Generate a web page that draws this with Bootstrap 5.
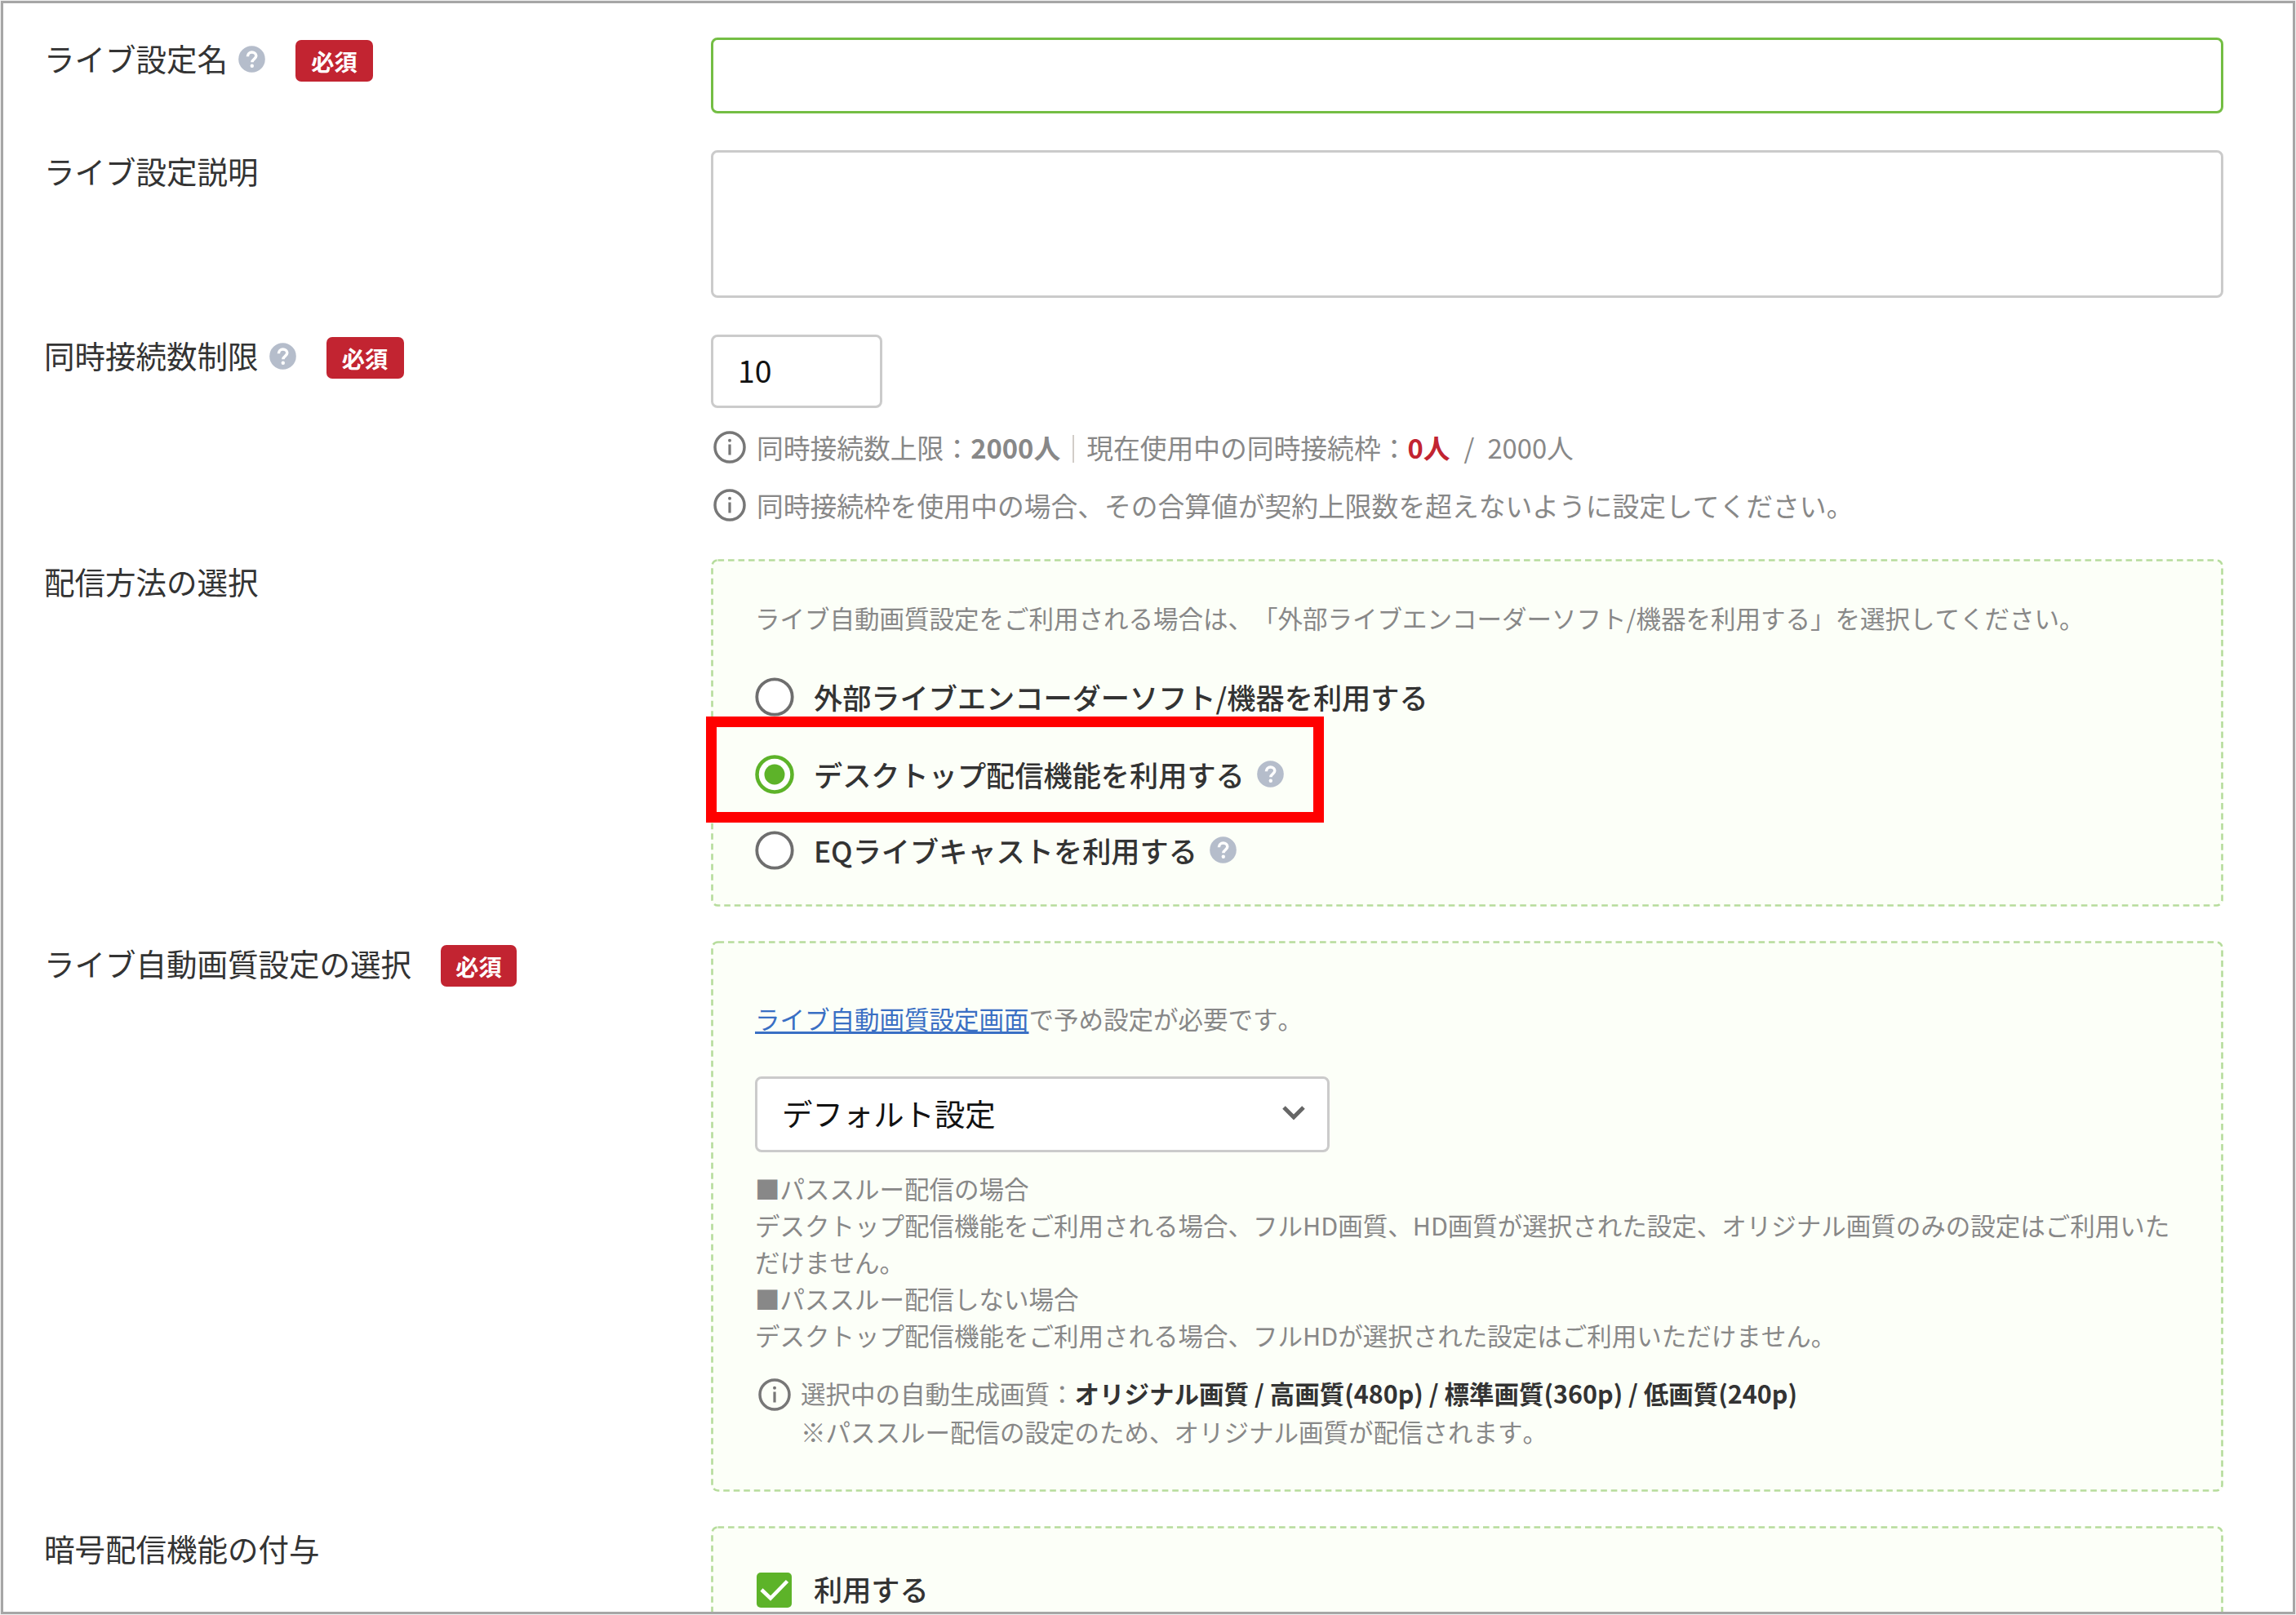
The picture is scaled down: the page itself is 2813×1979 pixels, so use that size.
<!DOCTYPE html>
<html lang="ja">
<head>
<meta charset="utf-8">
<meta name="viewport" content="width=device-width, initial-scale=1">
<title>ライブ設定</title>
<link href="https://cdn.jsdelivr.net/npm/bootstrap@5.3.0/dist/css/bootstrap.min.css" rel="stylesheet">
<style>
  html, body { height: 1979px; overflow: hidden; }
  body { background: #f0f0f0; padding: 1px; font-family: "Noto Sans CJK JP", "Noto Sans", sans-serif; color: #333; text-spacing-trim: space-all; font-kerning: none; }
  .frame { height: 1977px; border: 3px solid #a6a6a6; background: #fff; padding: 42px 85px 0 50px; overflow: hidden; }
  .frow { display: flex; }
  .flabel { flex: 0 0 817px; height: 50px; line-height: 50px; font-size: 37.5px; display: flex; align-items: flex-start; white-space: nowrap; }
  .flabel.low { padding-top: 1px; height: 51px; }
  .flabel.lower { padding-top: 2px; height: 52px; }
  .ffield { flex: 1 1 0; min-width: 0; }
  .req { background: #c22431; color: #fff; font-weight: 700; font-size: 28.2px; line-height: 52px; height: 51px; width: 95px; border-radius: 7px; text-align: center; padding: 0; margin: 3px 0 0 37px; }
  .qmark { width: 33px; height: 33px; flex: none; }
  .flabel .qmark { margin: 10px 0 0 13px; }
  .box-in { border: 3px solid #cbcbcb; border-radius: 8px; background: #fff; padding: 0 30px; font-size: 37.4px; color: #111; box-shadow: none !important; }
  .box-in.active-in { border-color: #74be44; height: 93px; }
  .note { font-size: 32.77px; line-height: 48px; height: 48px; color: #888; display: flex; white-space: nowrap; }
  .note .info { margin: 4px 13px 0 0; }
  .info { width: 40px; height: 40px; flex: none; }
  .bar { width: 2px; height: 34px; background: #d2cdc8; margin: 9px 15px 0 15px; }
  .panel { position: relative; background: #fcfff8; border-radius: 8px; padding: 0 54px; }
  .dash { position: absolute; inset: 0; width: 100%; height: 100%; pointer-events: none; }
  .dash rect { x: 1.5px; y: 1.5px; width: calc(100% - 3px); height: calc(100% - 3px); rx: 7px; fill: none; stroke: #b6dc9c; stroke-width: 2.6px; stroke-dasharray: 7.6 4.9; }
  .txt { font-size: 30.5px; color: #888; line-height: 45.1px; }
  .opt { display: flex; align-items: center; font-size: 35.2px; font-weight: 500; line-height: 46px; height: 48px; white-space: nowrap; }
  .opt .dot { width: 48px; height: 48px; flex: none; margin-right: 24px; }
  .opt .qmark { margin-left: 15px; margin-top: -2px; }
  .redbox { position: absolute; left: -6px; top: 193px; width: 757px; height: 130px; border: 13px solid #f00; }
  .lnk { color: #3a6fc4; text-decoration: underline; text-decoration-thickness: 3px; text-underline-offset: 3px; text-decoration-skip-ink: none; }
  .sel { width: 704px; height: 93px; line-height: 52px; padding-bottom: 3px; }
</style>
</head>
<body>
<svg width="0" height="0" class="position-absolute">
  <defs>
    <symbol id="q" viewBox="0 0 33 33"><circle cx="16.5" cy="16.5" r="16.3" fill="#b5bdcb"/><path d="M11.4 13.2c.1-3.2 2.400-5.1 5.200-5.1 2.900 0 5.200 1.800 5.200 4.500 0 3.700-4.900 3.700-4.900 7.600" fill="none" stroke="#fff" stroke-width="3.500"/><circle cx="16.800" cy="24.800" r="2.200" fill="#fff"/></symbol>
    <symbol id="i" viewBox="0 0 40 40"><circle cx="20" cy="20" r="18" fill="none" stroke="#777" stroke-width="3.500"/><path d="M20 16.500v13" stroke="#777" stroke-width="3.200"/><circle cx="20" cy="11.800" r="2" fill="#777"/></symbol>
  </defs>
</svg>
<main class="frame">
  <div class="frow" style="margin-bottom:45px">
    <label class="flabel">ライブ設定名<svg class="qmark"><use href="#q"/></svg><span class="badge req">必須</span></label>
    <div class="ffield"><input class="form-control box-in active-in" type="text"></div>
  </div>
  <div class="frow" style="margin-bottom:45px">
    <label class="flabel">ライブ設定説明</label>
    <div class="ffield"><div class="form-control box-in" style="height:181px"></div></div>
  </div>
  <div class="frow" style="height:275px">
    <label class="flabel">同時接続数制限<svg class="qmark"><use href="#q"/></svg><span class="badge req">必須</span></label>
    <div class="ffield">
      <input class="form-control box-in pb-1" type="text" value="10" style="width:210px;height:90px">
      <div class="note" style="margin:24px 0 23px 3px"><svg class="info"><use href="#i"/></svg><span>同時接続数上限：<b>2000人</b></span><span class="bar"></span><span>現在使用中の同時接続枠：<b style="color:#c22431">0人</b></span><span style="margin:0 16px 0 17px">/</span><span>2000人</span></div>
      <div class="note" style="margin-left:3px"><svg class="info"><use href="#i"/></svg><span>同時接続枠を使用中の場合、その合算値が契約上限数を超えないように設定してください。</span></div>
    </div>
  </div>
  <div class="frow" style="margin-bottom:42px">
    <label class="flabel lower">配信方法の選択</label>
    <div class="ffield panel" style="height:426px;padding-top:50px">
      <svg class="dash"><rect/></svg>
      <div class="txt" style="margin-bottom:50px">ライブ自動画質設定をご利用される場合は、「外部ライブエンコーダーソフト/機器を利用する」を選択してください。</div>
      <div class="opt" style="margin-bottom:47px"><svg class="dot" viewBox="0 0 48 48"><circle cx="24" cy="24" r="21.700" fill="#fff" stroke="#6e6e6e" stroke-width="3.800"/></svg>外部ライブエンコーダーソフト/機器を利用する</div>
      <div class="opt" style="margin-bottom:45px"><svg class="dot" viewBox="0 0 48 48"><circle cx="24" cy="24" r="21.500" fill="#fff" stroke="#5db329" stroke-width="4.500"/><circle cx="24" cy="24" r="12.500" fill="#5db329"/></svg>デスクトップ配信機能を利用する<svg class="qmark"><use href="#q"/></svg></div>
      <div class="opt"><svg class="dot" viewBox="0 0 48 48"><circle cx="24" cy="24" r="21.700" fill="#fff" stroke="#6e6e6e" stroke-width="3.800"/></svg>EQライブキャストを利用する<svg class="qmark"><use href="#q"/></svg></div>
      <div class="redbox"></div>
    </div>
  </div>
  <div class="frow" style="margin-bottom:42px">
    <label class="flabel lower">ライブ自動画質設定の選択<span class="badge req" style="margin-left:36px;width:93px">必須</span></label>
    <div class="ffield panel" style="height:675px;padding-top:73px">
      <svg class="dash"><rect/></svg>
      <div class="txt" style="margin-bottom:48px"><a class="lnk" href="#">ライブ自動画質設定画面</a>で予め設定が必要です。</div>
      <div class="box-in sel d-flex align-items-center justify-content-between"><span>デフォルト設定</span><svg width="30" height="20" viewBox="0 0 30 20" style="margin-right:-4px"><path d="M3 3l12 12L27 3" fill="none" stroke="#666" stroke-width="5"/></svg></div>
      <div class="txt" style="margin-top:22px">■パススルー配信の場合<br>デスクトップ配信機能をご利用される場合、フルHD画質、HD画質が選択された設定、オリジナル画質のみの設定はご利用いただけません。<br>■パススルー配信しない場合<br>デスクトップ配信機能をご利用される場合、フルHDが選択された設定はご利用いただけません。</div>
      <div class="d-flex txt" style="margin-top:24px;line-height:47px"><svg class="info" style="margin:5px 12px 0 4px"><use href="#i"/></svg><div>選択中の自動生成画質：<b style="color:#333">オリジナル画質 / 高画質(480p) / 標準画質(360p) / 低画質(240p)</b><br>※パススルー配信の設定のため、オリジナル画質が配信されます。</div></div>
    </div>
  </div>
  <div class="frow">
    <label class="flabel lower">暗号配信機能の付与</label>
    <div class="ffield panel" style="height:426px;padding-top:53px">
      <svg class="dash"><rect/></svg>
      <div class="opt"><svg class="dot" viewBox="0 0 48 48"><rect x="2" y="4" width="43" height="43" rx="5" fill="#5db329"/><path d="M8 25l11 10.500L39.500 14.500" fill="none" stroke="#fff" stroke-width="4.500"/></svg>利用する</div>
    </div>
  </div>
</main>
<script src="https://cdn.jsdelivr.net/npm/bootstrap@5.3.0/dist/js/bootstrap.bundle.min.js"></script>
</body>
</html>
